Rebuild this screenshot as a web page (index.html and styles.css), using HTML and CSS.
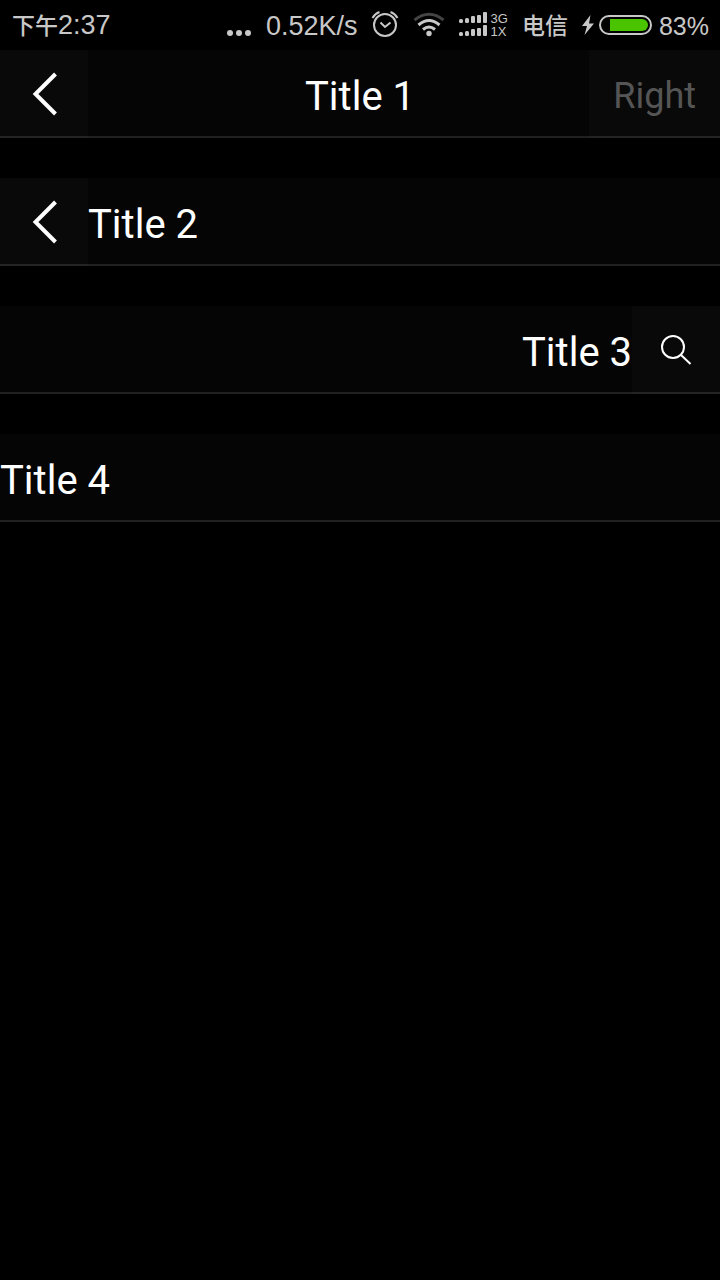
FILE: index.html
```html
<!DOCTYPE html>
<html lang="en">
<head>
<meta charset="utf-8">
<meta name="viewport" content="width=device-width, initial-scale=1">
<title>Title bars</title>
<link rel="stylesheet" href="styles.css">
</head>
<body>
<div class="status">
  <div class="clock"><span class="cjk" lang="zh">下午</span><span>2:37</span></div>
  <div class="indicators">
    <svg class="dots" width="26" height="50" viewBox="0 0 26 50" aria-hidden="true"><g fill="#c8c8c8"><circle cx="4" cy="33" r="3"/><circle cx="13" cy="33" r="3"/><circle cx="22" cy="33" r="3"/></g></svg>
    <span class="speed">0.52K/s</span>
    <svg class="alarm" width="28" height="50" viewBox="0 0 28 50" fill="none" stroke="#c8c8c8" aria-hidden="true"><circle cx="14" cy="25" r="11" stroke-width="2"/><path d="M9.500 22.500l4.500 4.500 5.500-4.500" stroke-width="2"/><path d="M1.500 18Q4 13.500 8.500 12M19.500 12Q24 13.500 26.500 18" stroke-width="2"/></svg>
    <svg class="wifi" width="32" height="50" viewBox="0 0 32 50" fill="none" aria-hidden="true"><path d="M1.500 20Q16 8.500 30.500 20" stroke="#444" stroke-width="3"/><path d="M5.500 25Q16 16 26.500 25" stroke="#c8c8c8" stroke-width="3"/><path d="M10 29.500Q16 24.500 22 29.500" stroke="#c8c8c8" stroke-width="3"/><circle cx="16" cy="33.500" r="2.700" fill="#c8c8c8"/></svg>
    <svg class="signal" width="28" height="50" viewBox="0 0 28 50" fill="#c8c8c8" aria-hidden="true"><rect y="19" width="4" height="4" rx="1.500"/><rect x="6" y="18" width="4" height="5" rx="1.500"/><rect x="12" y="16" width="4" height="7" rx="1.200"/><rect x="18" y="15" width="4" height="8" rx="1"/><rect x="24" y="12" width="4" height="11" rx="1"/><rect y="32" width="4" height="4" rx="1.500"/><rect x="6" y="31" width="4" height="5" rx="1.500"/><rect x="12" y="29" width="4" height="7" rx="1.200"/><rect x="18" y="28" width="4" height="8" rx="1"/><rect x="24" y="25" width="4" height="11" rx="1"/></svg>
    <div class="network"><span>3G</span><span>1X</span></div>
    <span class="cjk carrier" lang="zh">电信</span>
    <svg class="bolt" width="12" height="50" viewBox="0 0 12 50" aria-hidden="true"><path d="M8.500 15L0 26h5L2.500 35 12 23.500H7z" fill="#c8c8c8"/></svg>
    <svg class="battery" width="54" height="50" viewBox="0 0 54 50" aria-hidden="true"><rect x="1" y="16" width="51" height="18" rx="9" fill="none" stroke="#c8c8c8" stroke-width="2"/><path d="M11 19h32a6 6 0 0 1 0 12H11z" fill="#4bc400"/></svg>
    <span class="percent">83%</span>
  </div>
</div>
<main class="bars">
  <header class="bar bar-centered">
    <button class="action back" type="button" aria-label="Back"><svg width="28" height="44" viewBox="0 0 28 44" fill="none" stroke="#fff" stroke-width="4" aria-hidden="true"><path d="M25.500 2L5.500 22l20 20"/></svg></button>
    <h1 class="title">Title 1</h1>
    <button class="action text-action" type="button" disabled>Right</button>
  </header>
  <header class="bar">
    <button class="action back" type="button" aria-label="Back"><svg width="28" height="44" viewBox="0 0 28 44" fill="none" stroke="#fff" stroke-width="4" aria-hidden="true"><path d="M25.500 2L5.500 22l20 20"/></svg></button>
    <h1 class="title">Title 2</h1>
  </header>
  <header class="bar bar-end">
    <h1 class="title">Title 3</h1>
    <button class="action search" type="button" aria-label="Search"><svg width="32" height="32" viewBox="0 0 32 32" fill="none" stroke="#fff" stroke-width="2" aria-hidden="true"><circle cx="13" cy="13" r="11"/><path d="M20.500 20.500L30.500 30"/></svg></button>
  </header>
  <header class="bar">
    <h1 class="title">Title 4</h1>
  </header>
</main>
</body>
</html>
```
FILE: styles.css
```css
* {
  box-sizing: border-box;
}

body {
  margin: 0;
  min-height: 100vh;
  background: #000;
  color: #fff;
  font-family: Roboto, "Noto Sans CJK SC", sans-serif;
}

svg {
  display: block;
  flex: none;
}

.status {
  display: flex;
  justify-content: space-between;
  height: 50px;
  padding: 0 11px 0 12px;
  color: #c8c8c8;
  font-family: "Liberation Sans", "Noto Sans CJK SC", sans-serif;
  font-size: 27px;
  line-height: 50px;
  white-space: nowrap;
}

.clock,
.indicators {
  display: flex;
}

.cjk {
  font-family: "Noto Sans CJK SC", sans-serif;
  font-size: 23px;
  font-weight: 500;
  line-height: 48px;
}

.speed {
  margin: 0 13px 0 14px;
  line-height: 52px;
}

.wifi {
  margin: 0 14px;
}

.network {
  display: flex;
  flex-direction: column;
  justify-content: center;
  margin: 0 14px 0 4px;
  font-size: 13px;
  line-height: 13px;
}

.bolt {
  margin: 0 5px 0 14px;
}

.percent {
  margin-left: 6px;
  font-size: 25px;
  line-height: 52px;
}

.bars {
  display: flex;
  flex-direction: column;
  gap: 40px;
}

.bar {
  display: flex;
  height: 88px;
  background: linear-gradient(#202020, #202020) bottom / 100% 2px no-repeat #050505;
}

.bar-centered {
  display: grid;
  grid-template-columns: 1fr auto 1fr;
}

.bar-end {
  justify-content: flex-end;
}

.title {
  margin: 0;
  padding-top: 26px;
  font-size: 40px;
  font-weight: 400;
  line-height: 42px;
}

.action {
  display: flex;
  align-items: center;
  justify-content: center;
  min-width: 88px;
  margin: 0;
  padding: 0;
  border: 0;
  background: rgba(255, 255, 255, 0.02);
  color: #fff;
  font: inherit;
}

.back {
  justify-self: start;
}

.text-action {
  justify-self: end;
  padding: 4px 24px 0;
  color: #555;
  font-size: 36px;
}
```
